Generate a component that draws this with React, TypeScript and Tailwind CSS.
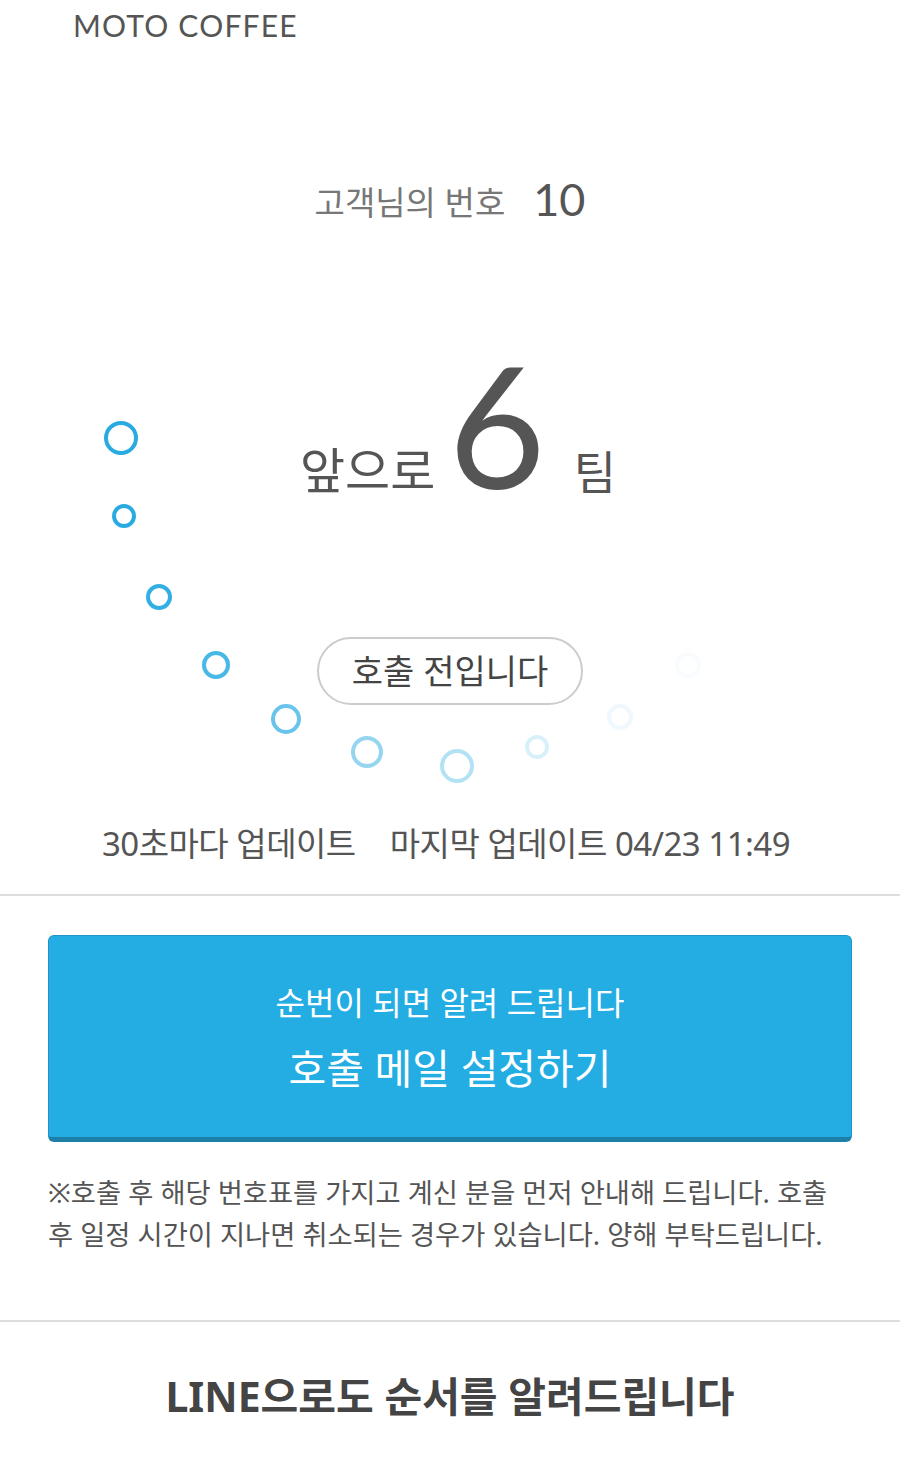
import React from "react";

const circles = [
  { x: 121, y: 438, r: 15, o: 1 },
  { x: 124, y: 516, r: 10, o: 1 },
  { x: 159, y: 597, r: 11, o: 0.95 },
  { x: 216, y: 665, r: 12, o: 0.85 },
  { x: 286, y: 719, r: 13, o: 0.7 },
  { x: 367, y: 752, r: 14, o: 0.5 },
  { x: 457, y: 766, r: 15, o: 0.35 },
  { x: 537, y: 747, r: 10, o: 0.18 },
  { x: 620, y: 717, r: 11, o: 0.08 },
  { x: 688, y: 665, r: 11, o: 0.03 },
];

export default function App() {
  return (
    <div
      className="relative w-[900px] h-[1457px] bg-white overflow-hidden text-[#555]"
      style={{ fontFamily: '"Noto Sans", "Noto Sans CJK KR", sans-serif' }}
    >
      <svg className="absolute left-0 top-0 pointer-events-none" width="900" height="900">
        {circles.map((c, i) => (
          <circle key={i} cx={c.x} cy={c.y} r={c.r} fill="none" stroke="#29abe2" strokeWidth="4" opacity={c.o} />
        ))}
      </svg>

      <div className="h-[52px] pl-[73px] pt-[3px] text-[30px] leading-[44px] text-[#555] tracking-[1.2px]" style={{ fontFamily: 'Lato, "Noto Sans CJK KR", sans-serif' }}>
        MOTO COFFEE
      </div>

      <div className="flex items-end justify-center gap-[28px] mt-[115px] h-[60px]">
        <span className="text-[33px] text-[#777] leading-[48px]">고객님의 번호</span>
        <span className="text-[45px] text-[#555] leading-[56px]" style={{ fontFamily: 'Lato, sans-serif' }}>10</span>
      </div>

      <div className="flex items-end justify-center mt-[130px] h-[140px] pl-[16px]">
        <span className="text-[49px] text-[#555] leading-[56px] mb-[-1px]">앞으로</span>
        <span className="text-[168px] text-[#555] leading-[146px] ml-[13px] mr-[28px]" style={{ fontFamily: 'Lato, sans-serif' }}>6</span>
        <span className="text-[46px] text-[#555] leading-[56px] mb-[-2px]">팀</span>
      </div>

      <div className="flex justify-center mt-[140px] relative">
        <div className="w-[266px] h-[68px] border-2 border-[#ccc] rounded-full flex items-center justify-center text-[34px] text-[#444]">
          호출 전입니다
        </div>
      </div>

      <div className="mt-[115px] text-center text-[33px] text-[#555] leading-[48px] tracking-[-0.5px] pr-[8px]">
        30초마다 업데이트<span className="inline-block w-[34px]" />마지막 업데이트 04/23 11:49
      </div>

      <div className="mt-[26px] h-[2px] bg-[#ddd]" />

      <div className="px-[48px] mt-[39px]">
        <div className="h-[207px] pt-[9px] rounded-[6px] bg-[#23ade3] border-b-[5px] border-[#1b7fa8] border-x border-t border-x-[#1f95c6] border-t-[#1f95c6] flex flex-col items-center justify-center text-white">
          <div className="text-[32px] leading-[44px] mt-[-6px]">순번이 되면 알려 드립니다</div>
          <div className="text-[41px] leading-[56px] mt-[15px]">호출 메일 설정하기</div>
        </div>
      </div>

      <div className="px-[48px] mt-[30px] text-[27.3px] leading-[42px] text-[#555] break-keep">
        ※호출 후 해당 번호표를 가지고 계신 분을 먼저 안내해 드립니다. 호출 후 일정 시간이 지나면 취소되는 경우가 있습니다. 양해 부탁드립니다.
      </div>

      <div className="mt-[64px] h-[2px] bg-[#ddd]" />

      <div className="mt-[46px] text-center text-[41px] font-bold text-[#444] leading-[56px]">
        LINE으로도 순서를 알려드립니다
      </div>
    </div>
  );
}
